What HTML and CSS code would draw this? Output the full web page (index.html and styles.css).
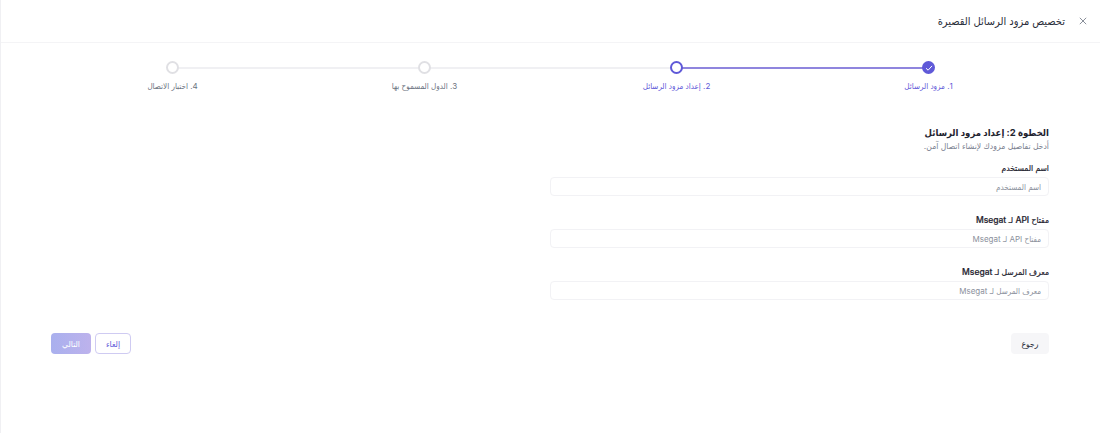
FILE: index.html
```html
<!DOCTYPE html>
<html lang="ar" dir="rtl">
<head>
    <meta charset="UTF-8">
    <meta name="viewport" content="width=device-width, initial-scale=1.0">
    <title>تخصيص مزود الرسائل القصيرة</title>
    <link rel="stylesheet" href="styles.css">
</head>
<body>
    <div class="dialog">
        <div class="dialog-header">
            <button class="close-btn" aria-label="إغلاق">
                <svg width="8" height="8" viewBox="0 0 8 8"><path d="M0.8 0.8 L7.2 7.2 M7.2 0.8 L0.8 7.2" stroke="#6b7280" stroke-width="0.8" fill="none"/></svg>
            </button>
            <h1>تخصيص مزود الرسائل القصيرة</h1>
        </div>

        <div class="stepper">
            <div class="step done">
                <div class="track">
                    <span class="dot">
                        <svg width="8" height="8" viewBox="0 0 8 8"><path d="M1 4.2 L3.1 6.2 L7 1.9" stroke="#fff" stroke-width="1" fill="none"/></svg>
                    </span>
                </div>
                <div class="step-label">1. مزود الرسائل</div>
            </div>
            <div class="step current">
                <div class="track"><span class="dot"></span></div>
                <div class="step-label">2. إعداد مزود الرسائل</div>
            </div>
            <div class="step">
                <div class="track"><span class="dot"></span></div>
                <div class="step-label">3. الدول المسموح بها</div>
            </div>
            <div class="step">
                <div class="track"><span class="dot"></span></div>
                <div class="step-label">4. اختبار الاتصال</div>
            </div>
        </div>

        <div class="step-body">
            <h2>الخطوة 2: إعداد مزود الرسائل</h2>
            <p class="step-desc">أدخل تفاصيل مزودك لإنشاء اتصال آمن.</p>

            <div class="form">
                <div class="field">
                    <label for="username">اسم المستخدم</label>
                    <input id="username" type="text" placeholder="اسم المستخدم">
                </div>
                <div class="field">
                    <label for="apikey">مفتاح API لـ Msegat</label>
                    <input id="apikey" type="text" placeholder="مفتاح API لـ Msegat">
                </div>
                <div class="field">
                    <label for="sender">معرف المرسل لـ Msegat</label>
                    <input id="sender" type="text" placeholder="معرف المرسل لـ Msegat">
                </div>
            </div>

            <div class="actions">
                <button class="btn btn-back">رجوع</button>
                <div class="actions-end">
                    <button class="btn btn-cancel">إلغاء</button>
                    <button class="btn btn-next" disabled>التالي</button>
                </div>
            </div>
        </div>
    </div>
</body>
</html>
```

FILE: styles.css
```css
* {
    box-sizing: border-box;
}
html, body {
    height: 100%;
}
body {
    margin: 0;
    font-family: Inter, "DejaVu Sans Condensed", "DejaVu Sans", sans-serif;
    color: #1f2430;
    background: #fff;
    overflow: hidden;
}
.dialog {
    height: 433px;
    border-left: 1px solid #f0f0f3;
}
.dialog-header {
    display: flex;
    align-items: center;
    gap: 14px;
    height: 43px;
    padding: 0 13px;
    border-bottom: 1px solid #f4f4f6;
}
.dialog-header h1 {
    margin: 0;
    font-size: 11px;
    font-weight: 500;
    color: #2a2e3a;
}
.close-btn {
    display: flex;
    padding: 0;
    border: 0;
    background: none;
}
.stepper {
    display: grid;
    grid-template-columns: repeat(4, 252px);
    justify-content: center;
    padding-top: 17px;
}
.step {
    display: flex;
    flex-direction: column;
    align-items: center;
}
.track {
    position: relative;
    display: flex;
    justify-content: center;
    width: 100%;
    height: 14px;
}
/* connector runs from this dot to the next one */
.track::after {
    content: "";
    position: absolute;
    top: 7px;
    right: 50%;
    width: 100%;
    height: 2px;
    background: #f0f0f3;
}
.step:last-child .track::after {
    display: none;
}
.step.done .track::after {
    background: #8f85de;
}
.dot {
    position: relative;
    z-index: 1;
    display: flex;
    align-items: center;
    justify-content: center;
    width: 13px;
    height: 13px;
    margin-top: 1px;
    border: 2px solid #e0e0e4;
    border-radius: 50%;
    background: #fff;
}
.step.done .dot {
    border: 0;
    background: #5f59d8;
}
.step.current .dot {
    border-color: #5f59d8;
}
.step-label {
    margin-top: 5px;
    font-size: 8px;
    line-height: 14px;
    color: #6b7280;
}
.step.done .step-label,
.step.current .step-label {
    color: #5f59d8;
}
.step-body {
    padding: 33px 51px 0 50px;
}
.step-body h2 {
    margin: 0;
    font-size: 9.5px;
    line-height: 14px;
    font-weight: 700;
    color: #1f2430;
}
.step-desc {
    margin: -1px 0 0;
    font-size: 8.5px;
    line-height: 14px;
    color: #7b8190;
}
.form {
    display: flex;
    flex-direction: column;
    gap: 18px;
    width: 499px;
    margin-top: 9px;
}
.field {
    display: flex;
    flex-direction: column;
    gap: 2px;
}
.field label {
    font-size: 8.5px;
    line-height: 13px;
    font-weight: 500;
    color: #1f2430;
    -webkit-text-stroke: 0.2px #1f2430;
}
.field input {
    width: 100%;
    height: 19px;
    padding: 0 7px;
    border: 1px solid #f2f2f5;
    border-radius: 4px;
    font-family: inherit;
    font-size: 8px;
    background: #fff;
    outline: none;
}
.field input::placeholder {
    color: #8b909c;
}
.actions {
    display: flex;
    justify-content: space-between;
    align-items: center;
    margin-top: 33px;
}
.actions-end {
    display: flex;
    gap: 4px;
}
.btn {
    height: 21px;
    padding: 0;
    border: 0;
    border-radius: 4px;
    font-family: inherit;
    font-size: 8.5px;
}
.btn-back {
    width: 38px;
    background: #f6f6f8;
    color: #2a2e3a;
}
.btn-cancel {
    width: 36px;
    border: 1px solid #cfcbf2;
    background: #fff;
    color: #5f59d8;
}
.btn-next {
    width: 40px;
    background: linear-gradient(90deg, #a9b0ee, #bdb2ec);
    color: #fff;
}
```
